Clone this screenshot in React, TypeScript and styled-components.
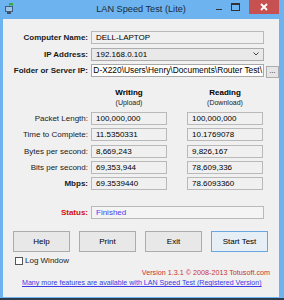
import styled, { createGlobalStyle } from "styled-components";

const GlobalStyle = createGlobalStyle`
  html, body {
    margin: 0;
    padding: 0;
    background: #2e3b48;
  }
  body {
    font-family: "Liberation Sans", Arial, sans-serif;
    font-size: 8px;
    color: #000;
  }
`;

const Window = styled.div`
  width: 284px;
  height: 298px;
  box-sizing: border-box;
  padding: 0 5px 1px 3px;
  background: #6cb3f0;
  display: flex;
  flex-direction: column;
`;

const TitleBar = styled.div`
  height: 19px;
  display: grid;
  grid-template-columns: 1fr auto 1fr;
  align-items: start;
`;

const AppIcon = styled.div`
  margin: 3px 0 0 1px;
  width: 11px;
  height: 11px;
`;

const Title = styled.div`
  font-size: 9.2px;
  line-height: 19px;
  color: #1b2b3a;
`;

const Controls = styled.div`
  justify-self: end;
  display: flex;
  align-items: flex-start;
`;

const CtrlButton = styled.div<{ $close?: boolean }>`
  width: ${(p) => (p.$close ? 30 : 16)}px;
  height: 14px;
  display: flex;
  align-items: center;
  justify-content: center;
  background: ${(p) => (p.$close ? "#c75050" : "transparent")};
  margin-left: ${(p) => (p.$close ? 6 : 0)}px;
`;

const Content = styled.div`
  flex: 1;
  background: #f0f0f0;
  padding-top: 12px;
  display: flex;
  flex-direction: column;
`;

const Row = styled.div<{ $gap?: number }>`
  display: flex;
  align-items: center;
  height: 13px;
  margin-top: ${(p) => p.$gap ?? 0}px;
`;

const Label = styled.div<{ $bold?: boolean; $color?: string }>`
  width: 85px;
  margin-right: 3px;
  text-align: right;
  font-weight: ${(p) => (p.$bold ? "bold" : "normal")};
  color: ${(p) => p.$color ?? "#1a1a1a"};
  white-space: nowrap;
  line-height: 13px;
`;

const Field = styled.div<{ $w: number; $bg?: string; $color?: string }>`
  width: ${(p) => p.$w}px;
  height: 13px;
  box-sizing: border-box;
  border: 1px solid #b9b9b9;
  background: ${(p) => p.$bg ?? "#f0f0f0"};
  color: ${(p) => p.$color ?? "#000"};
  padding-left: 4px;
  line-height: 11px;
  display: flex;
  align-items: center;
  white-space: nowrap;
  overflow: hidden;
`;

const Select = styled(Field)`
  justify-content: space-between;
  border-color: #acacac;
  padding-right: 4px;
`;

const PathField = styled(Field)`
  justify-content: flex-end;
  padding: 0 1px 0 0;
  border-color: #a8a8a8;
  font-size: 8.35px;
  span {
    flex-shrink: 0;
  }
`;

const DotsButton = styled.div`
  width: 11px;
  height: 10px;
  margin: 3px 0 0 2px;
  border: 1px solid #adadad;
  background: #e5e5e5;
  font-size: 7px;
  line-height: 7px;
  text-align: center;
`;

const HeaderRow = styled.div`
  display: flex;
  margin-top: 10px;
  padding-left: 88px;
`;

const ColHead = styled.div<{ $first?: boolean }>`
  width: 76px;
  margin-right: ${(p) => (p.$first ? 20 : 0)}px;
  text-align: center;
  b {
    display: block;
    font-size: 8px;
    line-height: 11px;
  }
  span {
    display: block;
    font-size: 7px;
    line-height: 9px;
    color: #222;
  }
`;

const DataRows = styled.div`
  margin-top: 5px;
  display: flex;
  flex-direction: column;
  gap: 3.3px;
`;

const Spacer = styled.div`
  width: 20px;
`;

const ButtonRow = styled.div`
  display: flex;
  gap: 9px;
  margin: 12px 0 0 10px;
`;

const Button = styled.div<{ $default?: boolean }>`
  width: 57px;
  height: 21px;
  box-sizing: border-box;
  border: 1px solid ${(p) => (p.$default ? "#6aa7e0" : "#acacac")};
  background: ${(p) => (p.$default ? "#e6eef6" : "#e8e8e8")};
  display: flex;
  align-items: center;
  justify-content: center;
  font-size: 8px;
`;

const CheckRow = styled.label`
  display: flex;
  align-items: center;
  gap: 2px;
  margin: 5px 0 0 12px;
  height: 8px;
  line-height: 8px;
  color: #222;
`;

const CheckBox = styled.span`
  width: 8px;
  height: 8px;
  box-sizing: border-box;
  border: 1px solid #555;
  background: #fff;
`;

const Version = styled.div`
  margin-top: 3px;
  padding-right: 9px;
  text-align: right;
  color: #c83232;
  font-size: 7.2px;
  line-height: 10px;
`;

const MoreLink = styled.a`
  margin-left: 19px;
  color: #3a3ae6;
  text-decoration: underline;
  font-size: 7.1px;
  line-height: 11px;
  white-space: nowrap;
`;

const dataRows: [string, string, string, boolean?][] = [
  ["Packet Length:", "100,000,000", "100,000,000"],
  ["Time to Complete:", "11.5350331", "10.1769078"],
  ["Bytes per second:", "8,669,243", "9,826,167"],
  ["Bits per second:", "69,353,944", "78,609,336"],
  ["Mbps:", "69.3539440", "78.6093360", true],
];

export default function App() {
  return (
    <>
      <GlobalStyle />
      <Window>
        <TitleBar>
          <AppIcon>
            <svg width="11" height="11" viewBox="0 0 11 11">
              <rect x="1" y="3" width="8" height="6" fill="#3d5f86" />
              <rect x="2" y="4" width="6" height="4" fill="#9fc6e6" />
              <rect x="3" y="9" width="4" height="2" fill="#44515e" />
              <path d="M5 0 L9 0 L9 3 L7 2 L5 3 Z" fill="#3aa845" />
            </svg>
          </AppIcon>
          <Title>LAN Speed Test (Lite)</Title>
          <Controls>
            <CtrlButton>
              <svg width="8" height="8" viewBox="0 0 8 8">
                <rect x="1" y="6" width="6" height="1" fill="#333" />
              </svg>
            </CtrlButton>
            <CtrlButton>
              <svg width="9" height="8" viewBox="0 0 9 8">
                <rect x="0.5" y="0.5" width="8" height="7" fill="none" stroke="#333" />
                <rect x="0.5" y="0.5" width="8" height="1.5" fill="#333" />
              </svg>
            </CtrlButton>
            <CtrlButton $close>
              <svg width="8" height="8" viewBox="0 0 8 8">
                <path d="M1 1 L7 7 M7 1 L1 7" stroke="#fff" strokeWidth="1.8" />
              </svg>
            </CtrlButton>
          </Controls>
        </TitleBar>
        <Content>
          <Row>
            <Label $bold>Computer Name:</Label>
            <Field $w={173}>DELL-LAPTOP</Field>
          </Row>
          <Row $gap={3.5}>
            <Label $bold>IP Address:</Label>
            <Select $w={173} $bg="#e9e9e9">
              192.168.0.101
              <svg width="6" height="4" viewBox="0 0 6 4">
                <path d="M0.5 0.5 L3 3 L5.5 0.5" fill="none" stroke="#444" />
              </svg>
            </Select>
          </Row>
          <Row $gap={3.5}>
            <Label $bold>Folder or Server IP:</Label>
            <PathField $w={173} $bg="#fff">
              <span>D-X220\Users\Henry\Documents\Router Test\</span>
            </PathField>
            <DotsButton>...</DotsButton>
          </Row>
          <HeaderRow>
            <ColHead $first>
              <b>Writing</b>
              <span>(Upload)</span>
            </ColHead>
            <ColHead>
              <b>Reading</b>
              <span>(Download)</span>
            </ColHead>
          </HeaderRow>
          <DataRows>
            {dataRows.map(([label, w, r, bold]) => (
              <Row key={label}>
                <Label $bold={bold}>{label}</Label>
                <Field $w={76}>{w}</Field>
                <Spacer />
                <Field $w={76}>{r}</Field>
              </Row>
            ))}
          </DataRows>
          <Row $gap={16}>
            <Label $bold $color="#d01010">Status:</Label>
            <Field $w={173} $bg="#f4f4f4" $color="#4a3cf0">Finished</Field>
          </Row>
          <ButtonRow>
            <Button>Help</Button>
            <Button>Print</Button>
            <Button>Exit</Button>
            <Button $default>Start Test</Button>
          </ButtonRow>
          <CheckRow>
            <CheckBox />
            Log Window
          </CheckRow>
          <Version>Version 1.3.1 © 2008-2013 Totusoft.com</Version>
          <MoreLink href="#">
            Many more features are available with LAN Speed Test (Registered Version)
          </MoreLink>
        </Content>
      </Window>
    </>
  );
}
